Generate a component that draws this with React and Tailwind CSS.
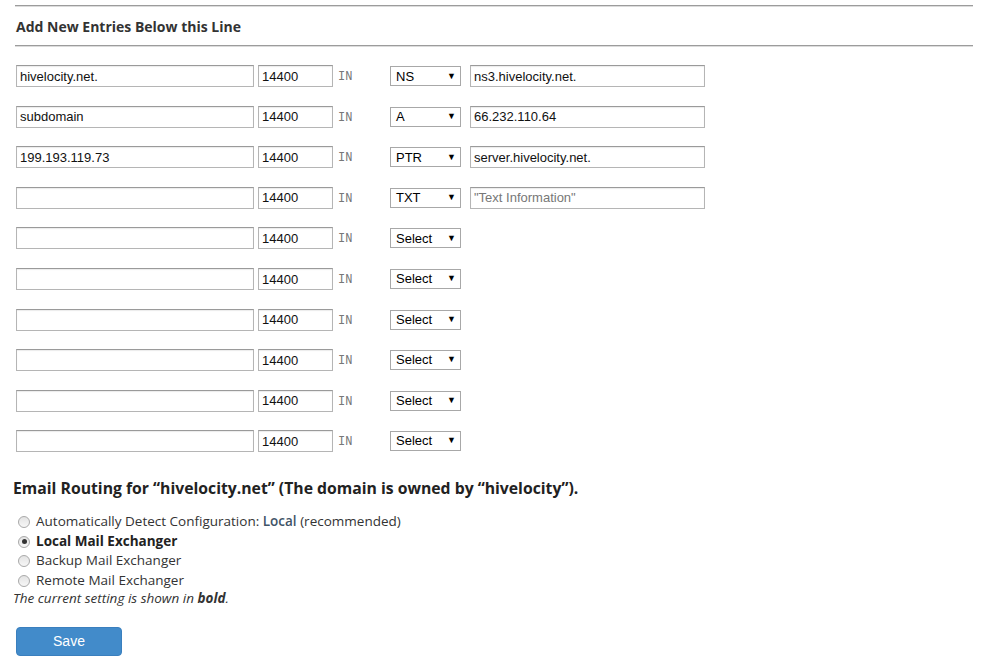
const rows = [
  { name: "hivelocity.net.", type: "NS", value: "ns3.hivelocity.net." },
  { name: "subdomain", type: "A", value: "66.232.110.64" },
  { name: "199.193.119.73", type: "PTR", value: "server.hivelocity.net." },
  { name: "", type: "TXT", value: "", placeholder: "\"Text Information\"" },
  { name: "", type: "Select" },
  { name: "", type: "Select" },
  { name: "", type: "Select" },
  { name: "", type: "Select" },
  { name: "", type: "Select" },
  { name: "", type: "Select" },
];

const inputCls =
  "h-[22px] border border-[#b5b5b5] border-t-[#9a9a9a] shadow-[inset_0_1px_1px_rgba(0,0,0,0.08)] bg-white px-[3px] text-[13px] text-[#111] outline-none placeholder:text-[#777]";

function Rule() {
  return (
    <div className="w-full">
      <div className="h-px bg-[#9c9c9c]" />
      <div className="h-px bg-[#dcdcdc]" />
    </div>
  );
}

function Radio({ checked }) {
  return (
    <span className="relative flex h-[12px] w-[12px] items-center justify-center rounded-full border border-[#a9a9a9] bg-gradient-to-b from-[#e3e3e3] to-[#f7f7f7]">
      {checked && <span className="h-[5px] w-[5px] rounded-full bg-[#333]" />}
    </span>
  );
}

function DnsRow({ row }) {
  return (
    <div className="flex h-[40.55px] items-center pl-px" style={{ fontFamily: '"Liberation Sans", Arial, sans-serif' }}>
      <input readOnly value={row.name} className={`${inputCls} w-[238px]`} />
      <input readOnly value="14400" className={`${inputCls} ml-[4px] w-[75px]`} />
      <span className="ml-[5px] mt-[2px] w-[52px] text-[12px] text-[#777]" style={{ fontFamily: '"Liberation Mono", "Courier New", monospace' }}>
        IN
      </span>
      <div className="flex h-[20px] w-[71px] items-center justify-between border border-[#a8a8a8] bg-white pl-[5px] pr-[4px] text-[13px] text-black">
        <span>{row.type}</span>
        <span className="text-[9px]">▼</span>
      </div>
      {row.value !== undefined && (
        <input
          readOnly
          value={row.value}
          placeholder={row.placeholder}
          className={`${inputCls} ml-[9px] h-[21px] w-[235px]`}
        />
      )}
    </div>
  );
}

export default function App() {
  return (
    <div className="min-h-screen bg-white pt-[5px] text-[#333]" style={{ fontFamily: '"Open Sans", sans-serif' }}>
      <div className="ml-[15px] w-[958px]">
        <Rule />
        <h3 className="pl-px pt-[11px] pb-[10px] text-[14px] font-bold leading-[17px] text-[#333]">
          Add New Entries Below this Line
        </h3>
        <Rule />
        <div className="mt-[9px]">
          {rows.map((row, i) => (
            <DnsRow key={i} row={row} />
          ))}
        </div>
      </div>

      {/* Email routing */}
      <div className="ml-[13px] mt-[16px]">
        <h2 className="text-[15.75px] font-bold leading-[22px] text-[#222]">
          Email Routing for “hivelocity.net” (The domain is owned by “hivelocity”).
        </h2>
        <div className="mt-[13px] pl-[5px] text-[13.5px] leading-[19.5px] text-[#333]">
          <label className="flex items-center gap-[6px]">
            <Radio />
            <span>
              Automatically Detect Configuration: <span className="font-semibold text-[#3f5468]">Local</span> (recommended)
            </span>
          </label>
          <label className="flex items-center gap-[6px]">
            <Radio checked />
            <span className="font-bold text-[#222]">Local Mail Exchanger</span>
          </label>
          <label className="flex items-center gap-[6px]">
            <Radio />
            <span>Backup Mail Exchanger</span>
          </label>
          <label className="flex items-center gap-[6px]">
            <Radio />
            <span>Remote Mail Exchanger</span>
          </label>
        </div>
        <p className="text-[13.5px] italic leading-[17px] text-[#333]">
          The current setting is shown in <b>bold</b>.
        </p>
        <button
          className="ml-[3px] mt-[20px] h-[29px] w-[106px] rounded-[4px] border border-[#3a7fbe] bg-[#428bca] text-[14px] text-white"
          style={{ fontFamily: '"Liberation Sans", Arial, sans-serif' }}
        >
          Save
        </button>
      </div>
    </div>
  );
}
